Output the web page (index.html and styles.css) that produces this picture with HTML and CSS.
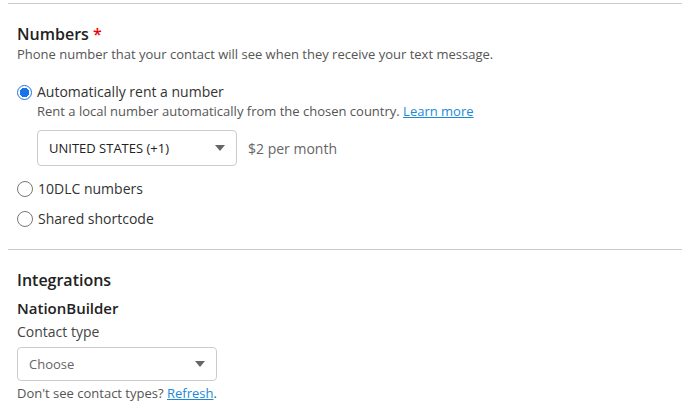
FILE: index.html
```html
<!DOCTYPE html>
<html lang="en">
<head>
    <meta charset="UTF-8">
    <title>Numbers settings</title>
    <link rel="stylesheet" href="styles.css">
</head>
<body>
    <div class="panel">
        <div class="section">
            <div class="section-title">Numbers <span class="required">*</span></div>
            <div class="hint">Phone number that your contact will see when they receive your text message.</div>

            <label class="radio-row first">
                <span class="radio checked"></span>
                <span>Automatically rent a number</span>
            </label>
            <div class="option-body">
                <div class="hint">Rent a local number automatically from the chosen country. <a href="#">Learn more</a></div>
                <div class="select-row">
                    <div class="select country">
                        <span>UNITED STATES (+1)</span>
                        <span class="caret"></span>
                    </div>
                    <span class="price">$2 per month</span>
                </div>
            </div>

            <label class="radio-row">
                <span class="radio"></span>
                <span>10DLC numbers</span>
            </label>
            <label class="radio-row">
                <span class="radio"></span>
                <span>Shared shortcode</span>
            </label>
        </div>

        <div class="section">
            <div class="section-title">Integrations</div>
            <div class="sub-title">NationBuilder</div>
            <div class="field-label">Contact type</div>
            <div class="select contact">
                <span class="placeholder">Choose</span>
                <span class="caret"></span>
            </div>
            <div class="hint">Don't see contact types? <a href="#">Refresh</a>.</div>
        </div>
    </div>
</body>
</html>
```

FILE: styles.css
```css
body {
    margin: 0;
    padding: 3px 14px 0 8px;
    font-family: "Open Sans", Arial, sans-serif;
    color: #333;
    background: #fff;
}
.section {
    border-top: 1px solid #ccc;
    padding: 19px 9px 0;
}
.section + .section {
    margin-top: 20px;
    padding-top: 19px;
}
.section-title {
    font-size: 16px;
    font-weight: 600;
    line-height: 22px;
    color: #222;
}
.required {
    color: #e00;
}
.hint {
    font-size: 13px;
    line-height: 19px;
    color: #555;
}
.hint a {
    color: #1a8ad8;
}
.radio-row {
    display: flex;
    align-items: center;
    gap: 5px;
    font-size: 14px;
    line-height: 20px;
    color: #333;
    margin-top: 13px;
}
.radio-row + .radio-row {
    margin-top: 10px;
}
.radio-row.first {
    margin-top: 18px;
}
.radio {
    width: 14px;
    height: 14px;
    border: 1px solid #777;
    border-radius: 50%;
    box-sizing: content-box;
    flex-shrink: 0;
}
.radio.checked {
    border: 1.5px solid #1a73e8;
    width: 13px;
    height: 13px;
    background: radial-gradient(circle, #1a73e8 0 4.5px, #fff 5px);
}
.option-body {
    padding-left: 20px;
}
.select-row {
    display: flex;
    align-items: center;
    gap: 11px;
    margin-top: 9px;
}
.select {
    display: flex;
    align-items: center;
    justify-content: space-between;
    box-sizing: border-box;
    border: 1px solid #ccc;
    border-radius: 4px;
    padding: 0 11px 0 11px;
    font-size: 13px;
}
.select.country {
    width: 200px;
    height: 36px;
    color: #222;
}
.select.contact {
    width: 200px;
    height: 34px;
    margin-top: 5px;
    margin-bottom: 3px;
}
.placeholder {
    color: #666;
}
.caret {
    width: 0;
    height: 0;
    border-left: 5.5px solid transparent;
    border-right: 5.5px solid transparent;
    border-top: 6px solid #666;
}
.price {
    font-size: 14px;
    color: #666;
}
.sub-title {
    font-size: 15px;
    font-weight: 600;
    line-height: 20px;
    margin-top: 7px;
    color: #222;
}
.field-label {
    font-size: 14px;
    line-height: 20px;
    margin-top: 4px;
    color: #444;
}
```
